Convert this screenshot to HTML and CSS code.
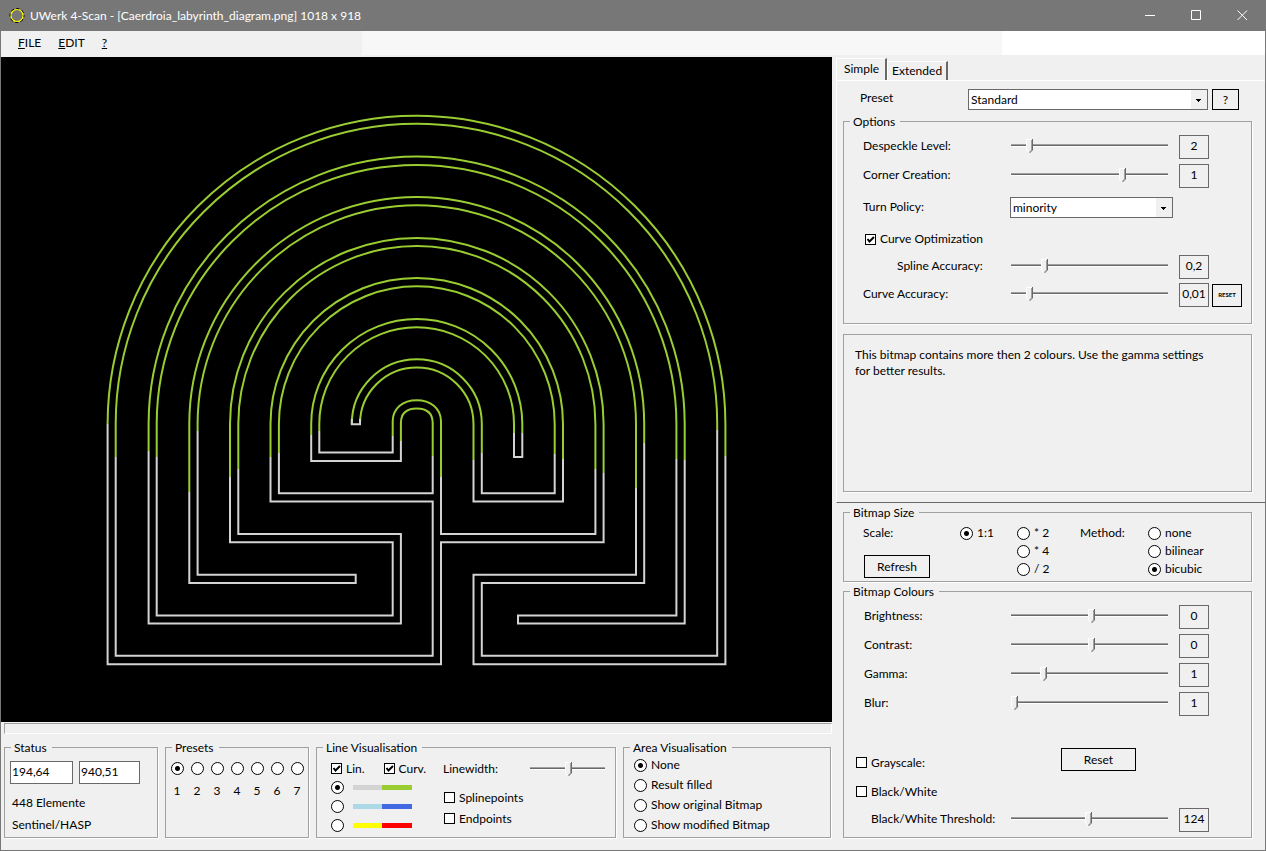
FILE: index.html
```html
<!DOCTYPE html>
<html lang="en">
<head>
  <meta charset="UTF-8" />
  <title>UWerk 4-Scan</title>
  <link rel="stylesheet" href="styles.css">
</head>
<body>
  <header class="titlebar">
    <svg class="app-icon" width="16" height="16" viewBox="0 0 16 16">
      <circle cx="8" cy="7.5" r="6.5" fill="none" stroke="#000" stroke-width="2" stroke-dasharray="3.1 2" stroke-dashoffset="1.5"/>
      <circle cx="8" cy="7.5" r="6" fill="none" stroke="#ff0" stroke-width="1.2"/>
    </svg>
    <h1>UWerk 4-Scan - [Caerdroia_labyrinth_diagram.png] 1018 x 918</h1>
    <button class="win-btn" aria-label="Minimize"><svg width="11" height="11"><path d="M0 5.5H10"/></svg></button>
    <button class="win-btn" aria-label="Maximize"><svg width="11" height="11"><path d="M.5 .5H9.5V9.5H.5Z"/></svg></button>
    <button class="win-btn" aria-label="Close"><svg width="11" height="11"><path d="M.5 .5L10 10M10 .5L.5 10"/></svg></button>
  </header>

  <nav class="menubar">
    <button><u>F</u>ILE</button>
    <button><u>E</u>DIT</button>
    <button><u>?</u></button>
  </nav>

  <main class="workspace">
    <section class="viewer">
      <svg class="canvas" viewBox="1 57 831 665">
        <g class="curves">
          <path d="M107.6 424A308.9 308.3 0 0 1 725.4 424V456"/>
          <path d="M115.7 457V424A300.75 300.2 0 0 1 717.2 424V430"/>
          <path d="M148.6 451V424A268.05 267.4 0 0 1 684.7 424V460"/>
          <path d="M156.7 457V424A259.85 259.1 0 0 1 676.4 424V459"/>
          <path d="M189.3 492V424A227.45 227 0 0 1 644.2 424V443"/>
          <path d="M197.6 431V424A219.2 218.7 0 0 1 636 424V488"/>
          <path d="M230 477V424A186.8 186.2 0 0 1 603.6 424V473"/>
          <path d="M238.3 469V424A178.55 178 0 0 1 595.4 424V469"/>
          <path d="M270.5 457V424A146.25 146 0 0 1 563 424V459"/>
          <path d="M278.9 453V424A137.9 137.7 0 0 1 554.7 424V454"/>
          <path d="M311.2 435V424A105.55 105 0 0 1 522.3 424V433"/>
          <path d="M319.3 431V424A97.35 96.7 0 0 1 514 424V433"/>
          <path d="M351.8 424A65 64.7 0 0 1 481.8 424V453"/>
          <path d="M360 424A56.75 56.6 0 0 1 473.5 424V460"/>
          <path d="M392.7 436V421C393 408 403 400.3 416.7 400.3S440.6 408 441 421V477"/>
          <path d="M400.9 441V423C401 413 406 408.5 416.7 408.5S432.6 413 432.7 423V456"/>
        </g>
        <g class="lines">
          <path d="M107.6 424V664.3H441V542.3H603.6V473"/>
          <path d="M115.7 457V655.8H432.7V501.6H270.5V457"/>
          <path d="M148.6 451V623.6H400.9V534.1H238.3V469"/>
          <path d="M156.7 457V615.4H392.7V542.3H230V477"/>
          <path d="M189.3 492V583H355.7V574.7H197.6V431"/>
          <path d="M278.9 453V493.3H432.7V456"/>
          <path d="M311.2 435V461H400.9V441"/>
          <path d="M319.3 431V452.6H392.7V436"/>
          <path d="M351.8 419V424.3H360V419"/>
          <path d="M441 477V534.1H595.4V469"/>
          <path d="M473.5 460V501.6H563V459"/>
          <path d="M481.8 453V493.3H554.7V454"/>
          <path d="M514 433V457H522.3V433"/>
          <path d="M636 488V574.7H473.5V664.3H725.4V456"/>
          <path d="M644.2 443V583H481.8V655.8H717.2V430"/>
          <path d="M676.4 459V615.4H518V623.6H684.7V460"/>
        </g>
      </svg>
      <div class="progress"></div>

      <div class="bottom-panels">
        <fieldset class="status">
          <legend>Status</legend>
          <div class="coords">
            <input type="text" class="coord-x" value="194,64" aria-label="X">
            <input type="text" class="coord-y" value="940,51" aria-label="Y">
          </div>
          <p>448 Elemente</p>
          <p>Sentinel/HASP</p>
        </fieldset>

        <fieldset class="presets">
          <legend>Presets</legend>
          <div class="preset-list">
            <label><input type="radio" name="slot" checked>1</label>
            <label><input type="radio" name="slot">2</label>
            <label><input type="radio" name="slot">3</label>
            <label><input type="radio" name="slot">4</label>
            <label><input type="radio" name="slot">5</label>
            <label><input type="radio" name="slot">6</label>
            <label><input type="radio" name="slot">7</label>
          </div>
        </fieldset>

        <fieldset class="line-vis">
          <legend>Line Visualisation</legend>
          <div class="line-cols">
            <div class="line-colours">
              <div class="line-types">
                <label class="opt"><input type="checkbox" checked>Lin.</label>
                <label class="opt"><input type="checkbox" checked>Curv.</label>
              </div>
              <label class="opt"><input type="radio" name="scheme" checked aria-label="Grey and green"><span class="swatch gray-green"></span></label>
              <label class="opt"><input type="radio" name="scheme" aria-label="Light and dark blue"><span class="swatch blues"></span></label>
              <label class="opt"><input type="radio" name="scheme" aria-label="Yellow and red"><span class="swatch yellow-red"></span></label>
            </div>
            <div class="line-opts">
              <div class="linewidth">
                <label for="linewidth">Linewidth:</label>
                <input type="range" id="linewidth" value="52">
              </div>
              <label class="opt"><input type="checkbox">Splinepoints</label>
              <label class="opt"><input type="checkbox">Endpoints</label>
            </div>
          </div>
        </fieldset>

        <fieldset class="area-vis">
          <legend>Area Visualisation</legend>
          <label class="opt"><input type="radio" name="area" checked>None</label>
          <label class="opt"><input type="radio" name="area">Result filled</label>
          <label class="opt"><input type="radio" name="area">Show original Bitmap</label>
          <label class="opt"><input type="radio" name="area">Show modified Bitmap</label>
        </fieldset>
      </div>
    </section>

    <aside class="settings">
      <div class="tabs" role="tablist">
        <button class="tab active" role="tab" aria-selected="true">Simple</button>
        <button class="tab" role="tab" aria-selected="false">Extended</button>
      </div>

      <div class="tab-page">
        <div class="preset-row">
          <label for="preset">Preset</label>
          <select id="preset"><option>Standard</option></select>
          <button class="btn help">?</button>
        </div>

        <fieldset class="group options">
          <legend>Options</legend>
          <div class="row">
            <label for="despeckle">Despeckle Level:</label>
            <input type="range" id="despeckle" value="10">
            <output for="despeckle">2</output>
          </div>
          <div class="row">
            <label for="corner">Corner Creation:</label>
            <input type="range" id="corner" value="72">
            <output for="corner">1</output>
          </div>
          <div class="row policy">
            <label for="policy">Turn Policy:</label>
            <select id="policy"><option>minority</option></select>
          </div>
          <div class="row short">
            <label class="opt"><input type="checkbox" checked>Curve Optimization</label>
          </div>
          <div class="row short">
            <label for="spline" class="indent">Spline Accuracy:</label>
            <input type="range" id="spline" value="20">
            <output for="spline">0,2</output>
          </div>
          <div class="row short with-reset">
            <label for="curve">Curve Accuracy:</label>
            <input type="range" id="curve" value="10">
            <output for="curve">0,01</output>
            <button class="btn mini">RESET</button>
          </div>
        </fieldset>

        <p class="message">This bitmap contains more then 2 colours. Use the gamma settings for better results.</p>
      </div>

      <fieldset class="group bitmap-size">
        <legend>Bitmap Size</legend>
        <div class="size-grid">
          <span>Scale:</span>
          <label class="opt"><input type="radio" name="scale" checked>1:1</label>
          <label class="opt"><input type="radio" name="scale">* 2</label>
          <span>Method:</span>
          <label class="opt"><input type="radio" name="method">none</label>
          <button class="btn refresh">Refresh</button>
          <label class="opt col-3"><input type="radio" name="scale">* 4</label>
          <label class="opt col-5"><input type="radio" name="method">bilinear</label>
          <label class="opt col-3"><input type="radio" name="scale">/ 2</label>
          <label class="opt col-5"><input type="radio" name="method" checked>bicubic</label>
        </div>
      </fieldset>

      <fieldset class="group colours">
        <legend>Bitmap Colours</legend>
        <div class="row">
          <label for="brightness">Brightness:</label>
          <input type="range" id="brightness" value="51">
          <output for="brightness">0</output>
        </div>
        <div class="row">
          <label for="contrast">Contrast:</label>
          <input type="range" id="contrast" value="51">
          <output for="contrast">0</output>
        </div>
        <div class="row">
          <label for="gamma">Gamma:</label>
          <input type="range" id="gamma" value="19">
          <output for="gamma">1</output>
        </div>
        <div class="row">
          <label for="blur">Blur:</label>
          <input type="range" id="blur" value="0">
          <output for="blur">1</output>
        </div>
        <div class="row gray">
          <label class="opt"><input type="checkbox">Grayscale:</label>
          <button class="btn reset">Reset</button>
        </div>
        <div class="row bw">
          <label class="opt"><input type="checkbox">Black/White</label>
        </div>
        <div class="row short">
          <label for="threshold" class="threshold">Black/White Threshold:</label>
          <input type="range" id="threshold" value="49">
          <output for="threshold">124</output>
        </div>
      </fieldset>
    </aside>
  </main>
</body>
</html>
```
FILE: styles.css
```css
* {
  box-sizing: border-box;
}
body {
  margin: 0;
  min-height: 100vh;
  display: flex;
  flex-direction: column;
  background: #f0f0f0;
  border: 1px solid #777;
  border-top: 0;
  color: #000;
  font: 12px/16px Lato, "Open Sans", sans-serif;
}
button, input, select, output {
  font: inherit;
  color: inherit;
  margin: 0;
}
p {
  margin: 0;
}

/* title and menu */
.titlebar {
  display: flex;
  align-items: center;
  height: 31px;
  padding-left: 8px;
  background: #777;
  color: #fff;
}
.titlebar h1 {
  flex: 1;
  margin: 0 0 0 5px;
  font-size: 12px;
  font-weight: normal;
}
.win-btn {
  width: 46px;
  height: 31px;
  padding: 0;
  border: 0;
  background: none;
}
.win-btn svg {
  display: block;
  margin: 0 auto;
  fill: none;
  stroke: #fff;
}
.menubar {
  display: flex;
  gap: 17px;
  height: 24px;
  margin-bottom: 2px;
  padding-left: 17px;
  background: linear-gradient(to right, #f0f0f0 361px, #f7f7f7 361px, #f7f7f7 1001px, #fff 1001px);
}
.menubar button {
  padding: 0;
  border: 0;
  background: none;
}

/* left side */
.workspace {
  flex: 1;
  display: grid;
  grid-template-columns: 1fr 433px;
}
.viewer {
  display: flex;
  flex-direction: column;
}
.canvas {
  flex: 1;
  width: 100%;
  min-height: 0;
  background: #000;
}
.canvas path {
  fill: none;
  stroke-width: 2;
}
.curves {
  stroke: #9acd32;
}
.lines {
  stroke: #d3d3d3;
}
.progress {
  height: 11px;
  margin: 1px 0 4px 3px;
  border: 1px solid #fff;
  border-top-color: #a0a0a0;
  border-left-color: #a0a0a0;
}
.bottom-panels {
  display: grid;
  grid-template-columns: 154px 144px 300px 1fr;
  gap: 7px;
  height: 100px;
  margin: 0 1px 12px 3px;
}

/* group boxes */
fieldset {
  min-width: 0;
  margin: 0;
  padding: 0;
  border: 1px solid #a0a0a0;
  box-shadow: 1px 1px 0 #fff;
}
legend {
  height: 18px;
  margin-left: 6px;
  padding: 2px 5px 0 3px;
}
.coords {
  display: flex;
  gap: 6px;
  padding: 5px 5px 8px;
}
.coords input {
  height: 23px;
  padding: 0 1px 3px;
  border: 1px solid #696969;
  background: #fff;
}
.coord-x {
  width: 63px;
}
.coord-y {
  width: 61px;
}
.status p {
  padding-left: 7px;
  line-height: 22px;
}
.preset-list {
  display: grid;
  grid-template-columns: repeat(7, 20px);
  padding: 6px 0 0 1px;
}
.preset-list label {
  display: flex;
  flex-direction: column;
  align-items: center;
  gap: 5px;
  line-height: 22px;
}
.line-cols {
  display: grid;
  grid-template-columns: 112px 1fr;
  padding: 3px 10px 0 14px;
}
.line-types {
  display: flex;
  gap: 19px;
}
.line-colours .opt {
  height: 19px;
}
.swatch {
  width: 59px;
  height: 5px;
  margin-left: 5px;
}
.gray-green {
  background: linear-gradient(to right, #d3d3d3 50%, #9acd32 50%);
}
.blues {
  background: linear-gradient(to right, #add8e6 50%, #4169e1 50%);
}
.yellow-red {
  background: linear-gradient(to right, #ff0 50%, #f00 50%);
}
.linewidth {
  display: flex;
  align-items: center;
  justify-content: space-between;
  height: 19px;
  margin-bottom: 9px;
}
.line-opts .opt {
  height: 21px;
  padding-left: 1px;
}
.area-vis .opt {
  height: 20px;
  padding: 0 0 2px 10px;
}

/* controls */
.opt {
  display: flex;
  align-items: center;
  gap: 4px;
}
input[type="radio"], input[type="checkbox"] {
  appearance: none;
  flex: none;
  background: #fff no-repeat center;
  border: 1px solid #000;
}
input[type="radio"] {
  width: 13px;
  height: 13px;
  border-radius: 50%;
}
input[type="radio"]:checked {
  background-image: radial-gradient(circle, #000 2px, transparent 3px);
}
input[type="checkbox"] {
  width: 11px;
  height: 11px;
}
input[type="checkbox"]:checked {
  background-image: url("data:image/svg+xml,%3Csvg xmlns='http://www.w3.org/2000/svg' width='9' height='9'%3E%3Cpath d='M1.5 4L3.5 6.5L8 2' fill='none' stroke='%23000' stroke-width='2'/%3E%3C/svg%3E");
}
input[type="range"] {
  appearance: none;
  width: 157px;
  height: 16px;
  background: linear-gradient(#a0a0a0 1px, #696969 1px 2px, #fff 2px) no-repeat 0 6px / 100% 3px;
}
.linewidth input[type="range"] {
  width: 75px;
}
input[type="range"]::-webkit-slider-thumb {
  appearance: none;
  width: 7px;
  height: 14px;
  background: url("data:image/svg+xml,%3Csvg xmlns='http://www.w3.org/2000/svg' width='7' height='14'%3E%3Cpath d='M0 0H7V11L4 14H3L0 11Z' fill='%23f0f0f0'/%3E%3Cpath d='M.5 11V.5H6M.5 11L3 13.5' fill='none' stroke='%23fff'/%3E%3Cpath d='M5.5 1V11L3.5 13' fill='none' stroke='%23a0a0a0'/%3E%3Cpath d='M6.5 0V11L3.5 14' fill='none' stroke='%23696969'/%3E%3C/svg%3E");
}
select {
  appearance: none;
  height: 21px;
  padding: 0 20px 0 2px;
  border: 1px solid #696969;
  border-radius: 0;
  background: #fff url("data:image/svg+xml,%3Csvg xmlns='http://www.w3.org/2000/svg' width='16' height='19'%3E%3Cpath d='M0 0H16V19H0Z' fill='%23f0f0f0'/%3E%3Cpath d='M5 9H10V10H9V11H8V12H7V11H6V10H5Z'/%3E%3C/svg%3E") no-repeat right center;
}
output {
  width: 30px;
  height: 24px;
  border: 1px solid #696969;
  line-height: 19px;
  text-align: center;
}
.btn {
  height: 23px;
  padding: 0;
  border: 1px solid #000;
  background: #f0f0f0;
}

/* right side */
.settings {
  padding-left: 4px;
}
.tabs {
  display: flex;
  align-items: flex-end;
  height: 23px;
}
.tab {
  height: 19px;
  padding: 0 4px;
  border: 1px solid #fff;
  border-right: 2px solid #696969;
  border-bottom: 0;
  background: #f0f0f0;
}
.tab.active {
  height: 22px;
  padding: 0 6px 1px 7px;
}
.tab-page {
  padding: 8px 13px 10px 6px;
  border: 1px solid #fff;
  border-right: 0;
  border-bottom-color: #696969;
}
.preset-row {
  display: flex;
  gap: 4px;
  margin-bottom: 2px;
  padding: 0 13px 0 17px;
}
.preset-row label {
  flex: 1;
  padding-top: 1px;
}
.preset-row select {
  width: 240px;
}
.help {
  width: 27px;
  height: 21px;
}
.group {
  padding-left: 19px;
  padding-right: 42px;
}
.group legend {
  margin-left: -13px;
}
.row {
  display: flex;
  align-items: center;
  height: 29px;
}
.row > label {
  flex: 1;
}
.row > label:not(.opt), .row input[type="range"] {
  margin-bottom: 2px;
}
.row output {
  margin-left: 11px;
}
.row.short {
  height: 28px;
}
.row.policy {
  height: 35px;
}
.policy select {
  width: 163px;
  margin-right: 36px;
}
.indent {
  padding-left: 34px;
}
.options {
  padding-top: 2px;
  padding-bottom: 14px;
}
.options .opt {
  padding-left: 2px;
}
.with-reset {
  margin-right: -33px;
}
.mini {
  width: 30px;
  margin-left: 3px;
  font-size: 6px;
  font-weight: bold;
}
.message {
  min-height: 158px;
  margin-top: 10px;
  padding: 12px 36px 0 11px;
  border: 1px solid #a0a0a0;
  box-shadow: 1px 1px 0 #fff;
}
.bitmap-size, .colours {
  margin: 0 13px 0 7px;
}
.bitmap-size {
  padding-top: 3px;
  padding-bottom: 3px;
}
.size-grid {
  display: grid;
  grid-template-columns: 97px 57px 63px 68px 1fr;
  grid-auto-rows: 18px;
  align-items: center;
  margin-right: -40px;
}
.col-3 {
  grid-column: 3;
}
.col-5 {
  grid-column: 5;
}
.refresh {
  grid-row: 2 / 4;
  width: 66px;
  margin-left: 1px;
  align-self: end;
}
.colours {
  padding-top: 2px;
  padding-bottom: 3px;
  padding-left: 20px;
}
.colours legend {
  margin-left: -14px;
}
.gray {
  margin-top: 30px;
}
.gray, .bw {
  margin-left: -8px;
}
.reset {
  width: 75px;
  margin-right: 73px;
  align-self: flex-start;
}
.threshold {
  padding-left: 7px;
}
```
